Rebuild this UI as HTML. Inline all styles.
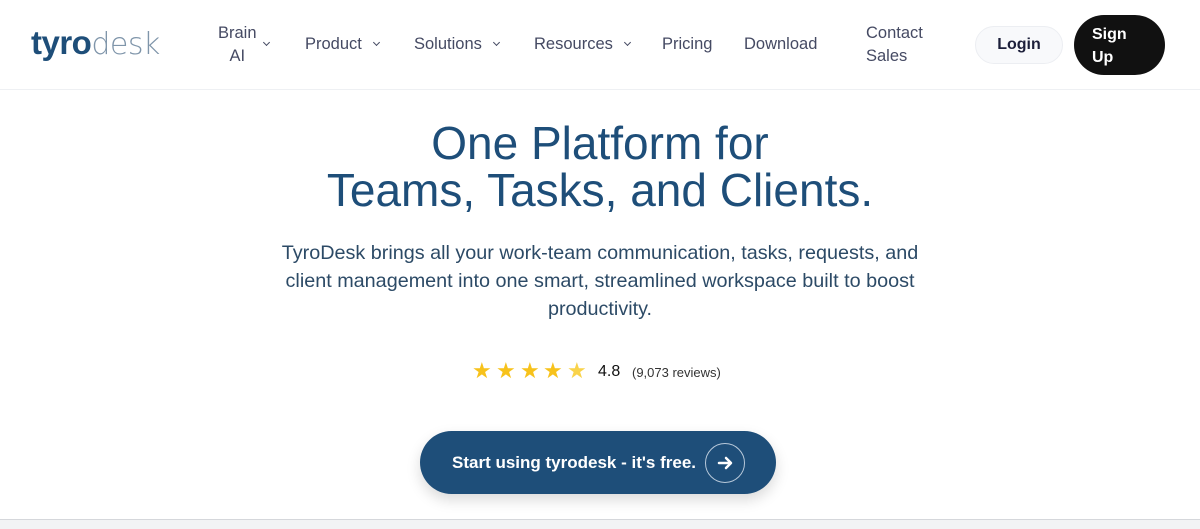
<!DOCTYPE html>
<html><head><meta charset="utf-8"><style>
*{margin:0;padding:0;box-sizing:border-box}
body{width:1200px;height:529px;overflow:hidden;background:#fff;font-family:"Liberation Sans","DejaVu Sans",sans-serif;position:relative}
.nav{position:absolute;top:0;left:0;width:1200px;height:90px;border-bottom:1px solid #eef0f3}
.logo{position:absolute;left:31px;top:24px;font-size:33px;letter-spacing:-0.5px;white-space:nowrap}
.logo b{color:#1e4e79;font-weight:900}
.logo span{color:#7f95aa;font-weight:200;font-family:"DejaVu Sans",sans-serif;font-size:30px;letter-spacing:-0.5px}
.ni{position:absolute;color:#454a63;font-size:16.5px;line-height:23px}
.chev{display:inline-block;width:5px;height:5px;border-right:1.5px solid #454a63;border-bottom:1.5px solid #454a63;transform:rotate(45deg);margin-left:12px;position:relative;top:-4px}
.login{position:absolute;left:975px;top:26px;width:88px;height:38px;border-radius:19px;background:#f8f9fb;border:1px solid #eceef2;color:#1c1f3a;font-weight:bold;font-size:16px;text-align:center;line-height:36px}
.sign{position:absolute;left:1074px;top:15px;width:91px;height:60px;border-radius:30px;background:#111;color:#fff;font-weight:bold;font-size:16px;line-height:23px;padding:8px 0 0 18px}
h1{position:absolute;top:120px;left:0;width:1200px;text-align:center;font-family:"Liberation Sans",sans-serif;font-weight:normal;color:#1e4e79;font-size:46px;line-height:47px}
p.sub{position:absolute;top:239px;left:230px;width:740px;text-align:center;color:#2c4a66;font-family:"Liberation Sans",sans-serif;font-size:19.8px;line-height:28px}
.rate{position:absolute;top:360px;left:470px;height:26px;font-family:"Liberation Sans",sans-serif}
.star{position:absolute;top:-2px;color:#f7c21b;font-size:22px}
.btn{position:absolute;left:420px;top:431px;width:356px;height:63px;border-radius:32px;background:#1e4e79;box-shadow:0 6px 14px rgba(0,0,0,.15);color:#fff;font-family:"Liberation Sans",sans-serif;font-weight:bold;font-size:17px;line-height:63px;padding-left:32px;white-space:nowrap}
.circ{position:absolute;left:285px;top:12px;width:40px;height:40px;border-radius:50%;border:1px solid #b8c9da}
.bot{position:absolute;left:0;top:519px;width:1200px;height:10px;background:#f2f3f5;border-top:1px solid #d5d7db}
</style></head><body>
<div class="nav">
<div class="logo"><b>tyro</b><span>desk</span></div>
<div class="ni" style="left:218px;top:22px;text-align:center">Brain<br>AI</div><div class="chev" style="position:absolute;left:264px;top:40px;margin:0"></div>
<div class="ni" style="left:305px;top:33px">Product<span class="chev"></span></div>
<div class="ni" style="left:414px;top:33px">Solutions<span class="chev"></span></div>
<div class="ni" style="left:534px;top:33px">Resources<span class="chev"></span></div>
<div class="ni" style="left:662px;top:33px">Pricing</div>
<div class="ni" style="left:744px;top:33px">Download</div>
<div class="ni" style="left:866px;top:22px">Contact<br>Sales</div>
<div class="login">Login</div>
<div class="sign">Sign<br>Up</div>
</div>
<h1>One Platform for<br>Teams, Tasks, and Clients.</h1>
<p class="sub">TyroDesk brings all your work-team communication, tasks, requests, and<br>client management into one smart, streamlined workspace built to boost<br>productivity.</p>
<div class="rate">
<span class="star" style="left:2px">★</span><span class="star" style="left:26px">★</span><span class="star" style="left:50px">★</span><span class="star" style="left:73px">★</span><span class="star" style="left:97px;color:#f9d34a">★</span>
<span style="position:absolute;left:128px;top:3px;font-size:16px;color:#111">4.8</span>
<span style="position:absolute;left:162px;top:5px;font-size:13px;color:#333;white-space:nowrap">(9,073 reviews)</span>
</div>
<div class="btn">Start using tyrodesk - it's free.<div class="circ"><svg width="40" height="40" viewBox="0 0 40 40" style="position:absolute;left:-1px;top:-1px"><path d="M14 20h11M21 15l5 5-5 5" stroke="#fff" stroke-width="2.5" fill="none" stroke-linecap="round" stroke-linejoin="round"/></svg></div></div>
<div class="bot"></div>
</body></html>
